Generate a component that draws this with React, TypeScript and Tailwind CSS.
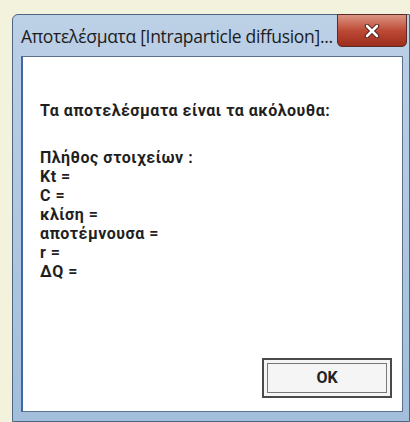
export default function App() {
  const lines = ["Πλήθος στοιχείων :", "Kt =", "C =", "κλίση =", "αποτέμνουσα =", "r =", "ΔQ ="];
  return (
    <div
      className="w-[410px] h-[422px] overflow-hidden bg-[#f3f2dc] pt-[14px] pl-[12px] flex"
      style={{ fontFamily: '"Open Sans", "Noto Sans", sans-serif' }}
    >
      {/* window frame */}
      <div className="flex-1 flex flex-col bg-gradient-to-b from-[#bcd0e6] to-[#a3bedb] border border-[#4f6584] rounded-tl-[6px] pl-[8px] pr-[6px] pb-[9px]">
        {/* title bar */}
        <div className="h-[41px] flex items-start relative">
          <span className="mt-[8px] text-[17.5px] text-[#1c1c1c] tracking-[-0.3px] whitespace-nowrap">
            Αποτελέσματα [Intraparticle diffusion]...
          </span>
          <div className="absolute right-[-4px] top-[-1px] w-[70px] h-[33px] rounded-b-[5px] border border-[#5a2a24] bg-gradient-to-b from-[#d99482] via-[#bd4a35] to-[#9c2c1c] flex items-center justify-center">
            <svg width="16" height="14" viewBox="0 0 16 14">
              <path d="M3 2 L13 12 M13 2 L3 12" stroke="#4a1a14" strokeWidth="4.5" strokeLinecap="round" />
              <path d="M3 2 L13 12 M13 2 L3 12" stroke="#ffffff" strokeWidth="2.6" strokeLinecap="round" />
            </svg>
          </div>
        </div>
        {/* client area */}
        <div
          className="flex-1 bg-white border border-[#5b708f] border-l-[2px] border-l-[#3f68a3] flex flex-col pl-[17px] pr-[10px] pt-[44px] pb-[13px] text-[#1f1f1f] font-bold text-[16px]"
          style={{ fontFamily: 'Roboto, "Open Sans", sans-serif' }}
        >
          <div className="leading-[19px] tracking-[0.5px] whitespace-nowrap">Τα αποτελέσματα είναι τα ακόλουθα:</div>
          <div className="mt-[28px] flex flex-col leading-[19px] tracking-[0.5px]">
            {lines.map((l) => (
              <div key={l}>{l}</div>
            ))}
          </div>
          <div className="flex-1" />
          <div className="flex justify-end">
            <button className="w-[130px] h-[40px] border-2 border-[#4a4a4a] bg-[#f5f5f5] p-[3px]">
              <div className="w-full h-full border border-[#777] flex items-center justify-center text-[16px] font-bold text-[#222]">
                OK
              </div>
            </button>
          </div>
        </div>
      </div>
    </div>
  );
}
